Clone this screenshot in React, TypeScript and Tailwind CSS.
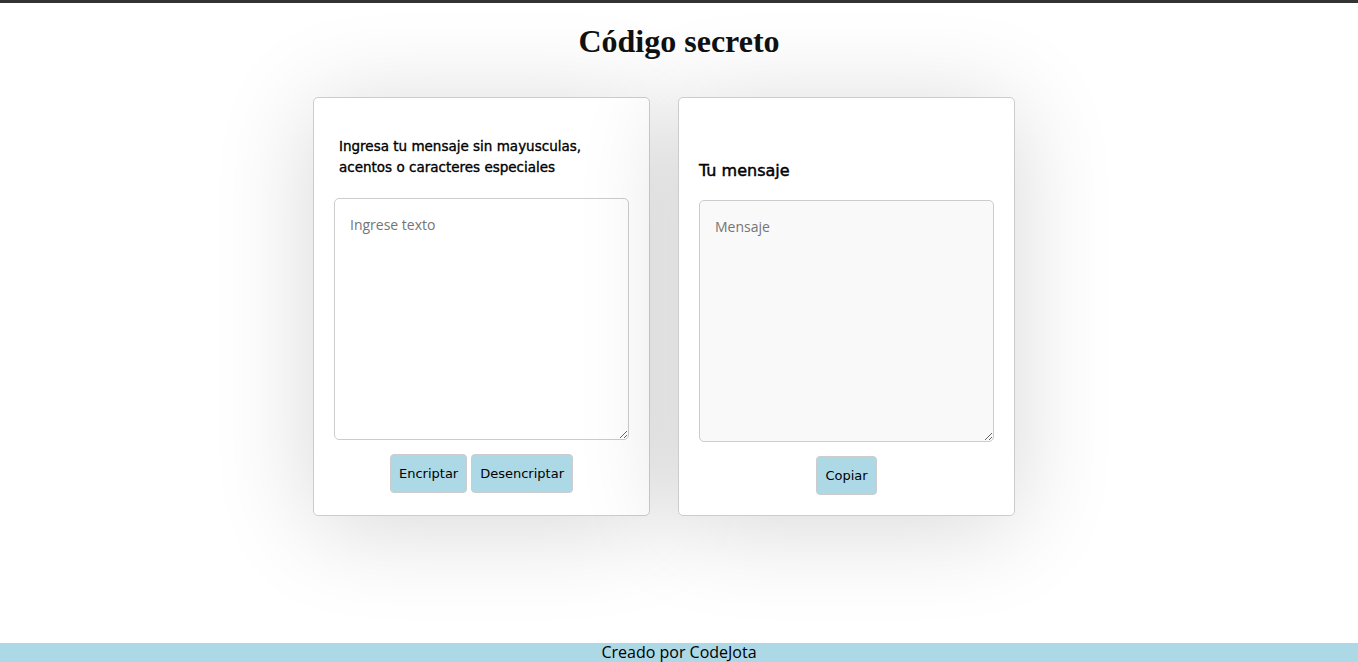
// App - "Código secreto" encrypt/decrypt page.

import { useState } from 'react';

const cardClass =
  'flex w-[337px] flex-col rounded-[5px] border border-[#ccc] bg-white p-5 shadow-[0_10px_100px_rgba(0,0,0,0.16)]';

const areaClass =
  'h-[242px] w-full rounded-[5px] border border-[#ccc] px-[15px] py-[16px] text-[14px] leading-[20px] text-black outline-none placeholder:text-[#757575] [font-family:"Open_Sans",sans-serif]';

const buttonClass =
  'h-[39px] rounded-[4px] border border-[#ccc] bg-[#add8e6] px-[8px] text-[13px] text-black [font-family:"DejaVu_Sans",sans-serif]';

export default function App() {
  const [text, setText] = useState('');
  const [result, setResult] = useState('');

  return (
    <div className="flex min-h-screen flex-col bg-white">
      <div className="h-[3px] bg-[#333]" />

      <h1 className="mt-[20px] text-center text-[32px] font-bold leading-[37px] text-[#111] [font-family:'Liberation_Serif',serif]">
        Código secreto
      </h1>

      <main className="mt-[37px] flex justify-center gap-7 pr-[30px] [font-family:'DejaVu_Sans',sans-serif]">
        <section className={cardClass}>
          <p className="mt-[18px] pl-[5px] text-[13.5px] leading-[21px] text-black [-webkit-text-stroke:0.35px_black]">
            Ingresa tu mensaje sin mayusculas, acentos o caracteres especiales
          </p>
          <textarea
            className={`mt-5 bg-white ${areaClass}`}
            placeholder="Ingrese texto"
            value={text}
            onChange={(e) => setText(e.target.value)}
          />
          <div className="mt-[14px] flex justify-center gap-1">
            <button className={buttonClass} onClick={() => setResult(text)}>
              Encriptar
            </button>
            <button className={buttonClass} onClick={() => setResult(text)}>
              Desencriptar
            </button>
          </div>
        </section>

        <section className={cardClass}>
          <h3 className="mt-[43px] text-[16px] leading-[20px] text-black [-webkit-text-stroke:0.45px_black]">
            Tu mensaje
          </h3>
          <textarea
            className={`mt-[19px] bg-[#f9f9f9] ${areaClass}`}
            placeholder="Mensaje"
            value={result}
            readOnly
          />
          <div className="mt-[14px] flex justify-center">
            <button className={buttonClass}>Copiar</button>
          </div>
        </section>
      </main>

      <footer className="mt-auto h-[19px] bg-[#add8e6] text-center text-[16px] leading-[19px] text-black [font-family:'Open_Sans',sans-serif]">
        Creado por CodeJota
      </footer>
    </div>
  );
}
